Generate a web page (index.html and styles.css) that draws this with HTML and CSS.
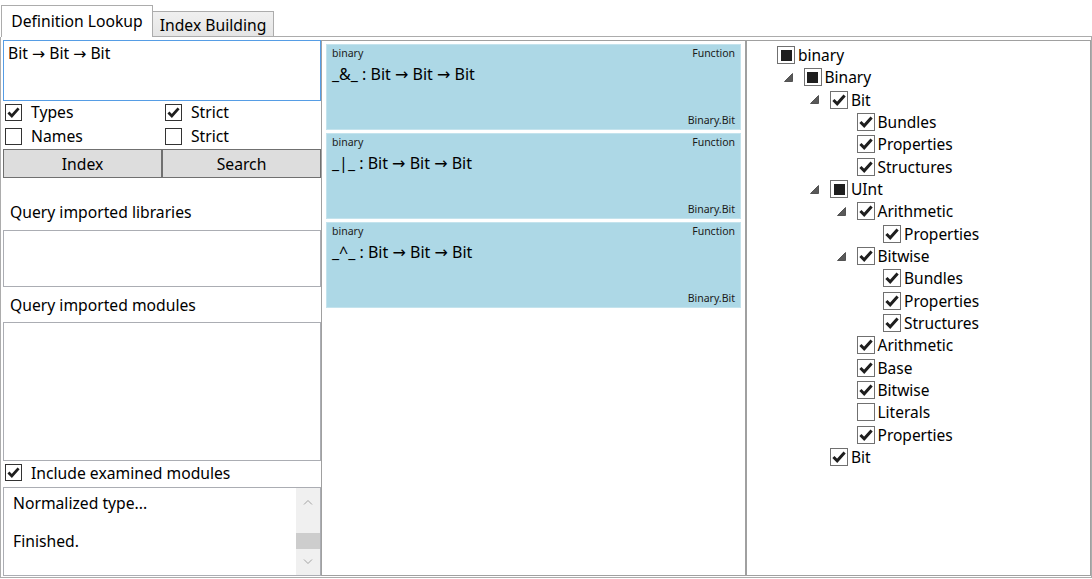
FILE: index.html
```html
<!DOCTYPE html>
<html>
<head>
<meta charset="utf-8">
<title>Definition Lookup</title>
<link rel="stylesheet" href="styles.css">
</head>
<body>
<div class="window">
  <div class="tabbar">
    <div class="tab active">Definition Lookup</div>
    <div class="tab inactive">Index Building</div>
    <div class="tabfill"></div>
  </div>
  <div class="content">
    <div class="left">
      <div class="query">Bit → Bit → Bit</div>
      <div class="opts">
        <div class="chk c1"><span class="cb"><svg viewBox="0 0 16 16"><path d="M2.6 8 L6.2 11.6 L13.4 3.6"/></svg></span>Types</div>
        <div class="chk c2"><span class="cb"><svg viewBox="0 0 16 16"><path d="M2.6 8 L6.2 11.6 L13.4 3.6"/></svg></span>Strict</div>
        <div class="chk c1"><span class="cb"></span>Names</div>
        <div class="chk c2"><span class="cb"></span>Strict</div>
      </div>
      <div class="btns">
        <div class="btn">Index</div>
        <div class="btn">Search</div>
      </div>
      <div class="lbl lbl-a">Query imported libraries</div>
      <div class="listbox lib"></div>
      <div class="lbl lbl-b">Query imported modules</div>
      <div class="listbox mods"></div>
      <div class="chk include"><span class="cb"><svg viewBox="0 0 16 16"><path d="M2.6 8 L6.2 11.6 L13.4 3.6"/></svg></span>Include examined modules</div>
      <div class="log">
        <div class="log-items">
          <div class="log-item">Normalized type...</div>
          <div class="log-item">Finished.</div>
        </div>
        <div class="scrollbar">
          <div class="sb-btn up"><svg viewBox="0 0 10 6"><polyline points="1,5.5 5,1.5 9,5.5"/></svg></div>
          <div class="sb-track"><div class="sb-thumb"></div></div>
          <div class="sb-btn down"><svg viewBox="0 0 10 6"><polyline points="1,0.5 5,4.5 9,0.5"/></svg></div>
        </div>
      </div>
    </div>

    <div class="results">
      <div class="card">
        <div class="card-head"><span>binary</span><span>Function</span></div>
        <div class="card-sig">_&amp;_ : Bit → Bit → Bit</div>
        <div class="card-foot">Binary.Bit</div>
      </div>
      <div class="card">
        <div class="card-head"><span>binary</span><span>Function</span></div>
        <div class="card-sig">_|_ : Bit → Bit → Bit</div>
        <div class="card-foot">Binary.Bit</div>
      </div>
      <div class="card">
        <div class="card-head"><span>binary</span><span>Function</span></div>
        <div class="card-sig">_^_ : Bit → Bit → Bit</div>
        <div class="card-foot">Binary.Bit</div>
      </div>
    </div>

    <div class="tree">
      <div class="row l0"><span class="exp"></span><span class="tcb ind"><span class="sq"></span></span><span class="tt">binary</span></div>
      <div class="row l1"><span class="exp"><svg viewBox="0 0 9 9"><polygon points="8.5,0.5 8.5,8.5 0.5,8.5"/></svg></span><span class="tcb ind"><span class="sq"></span></span><span class="tt">Binary</span></div>
      <div class="row l2"><span class="exp"><svg viewBox="0 0 9 9"><polygon points="8.5,0.5 8.5,8.5 0.5,8.5"/></svg></span><span class="tcb"><svg viewBox="0 0 16 16"><path d="M2.4 8 L6.2 11.8 L13.6 3.4"/></svg></span><span class="tt">Bit</span></div>
      <div class="row l3"><span class="exp"></span><span class="tcb"><svg viewBox="0 0 16 16"><path d="M2.4 8 L6.2 11.8 L13.6 3.4"/></svg></span><span class="tt">Bundles</span></div>
      <div class="row l3"><span class="exp"></span><span class="tcb"><svg viewBox="0 0 16 16"><path d="M2.4 8 L6.2 11.8 L13.6 3.4"/></svg></span><span class="tt">Properties</span></div>
      <div class="row l3"><span class="exp"></span><span class="tcb"><svg viewBox="0 0 16 16"><path d="M2.4 8 L6.2 11.8 L13.6 3.4"/></svg></span><span class="tt">Structures</span></div>
      <div class="row l2"><span class="exp"><svg viewBox="0 0 9 9"><polygon points="8.5,0.5 8.5,8.5 0.5,8.5"/></svg></span><span class="tcb ind"><span class="sq"></span></span><span class="tt">UInt</span></div>
      <div class="row l3"><span class="exp"><svg viewBox="0 0 9 9"><polygon points="8.5,0.5 8.5,8.5 0.5,8.5"/></svg></span><span class="tcb"><svg viewBox="0 0 16 16"><path d="M2.4 8 L6.2 11.8 L13.6 3.4"/></svg></span><span class="tt">Arithmetic</span></div>
      <div class="row l4"><span class="exp"></span><span class="tcb"><svg viewBox="0 0 16 16"><path d="M2.4 8 L6.2 11.8 L13.6 3.4"/></svg></span><span class="tt">Properties</span></div>
      <div class="row l3"><span class="exp"><svg viewBox="0 0 9 9"><polygon points="8.5,0.5 8.5,8.5 0.5,8.5"/></svg></span><span class="tcb"><svg viewBox="0 0 16 16"><path d="M2.4 8 L6.2 11.8 L13.6 3.4"/></svg></span><span class="tt">Bitwise</span></div>
      <div class="row l4"><span class="exp"></span><span class="tcb"><svg viewBox="0 0 16 16"><path d="M2.4 8 L6.2 11.8 L13.6 3.4"/></svg></span><span class="tt">Bundles</span></div>
      <div class="row l4"><span class="exp"></span><span class="tcb"><svg viewBox="0 0 16 16"><path d="M2.4 8 L6.2 11.8 L13.6 3.4"/></svg></span><span class="tt">Properties</span></div>
      <div class="row l4"><span class="exp"></span><span class="tcb"><svg viewBox="0 0 16 16"><path d="M2.4 8 L6.2 11.8 L13.6 3.4"/></svg></span><span class="tt">Structures</span></div>
      <div class="row l3"><span class="exp"></span><span class="tcb"><svg viewBox="0 0 16 16"><path d="M2.4 8 L6.2 11.8 L13.6 3.4"/></svg></span><span class="tt">Arithmetic</span></div>
      <div class="row l3"><span class="exp"></span><span class="tcb"><svg viewBox="0 0 16 16"><path d="M2.4 8 L6.2 11.8 L13.6 3.4"/></svg></span><span class="tt">Base</span></div>
      <div class="row l3"><span class="exp"></span><span class="tcb"><svg viewBox="0 0 16 16"><path d="M2.4 8 L6.2 11.8 L13.6 3.4"/></svg></span><span class="tt">Bitwise</span></div>
      <div class="row l3"><span class="exp"></span><span class="tcb"></span><span class="tt">Literals</span></div>
      <div class="row l3"><span class="exp"></span><span class="tcb"><svg viewBox="0 0 16 16"><path d="M2.4 8 L6.2 11.8 L13.6 3.4"/></svg></span><span class="tt">Properties</span></div>
      <div class="row l2"><span class="exp"></span><span class="tcb"><svg viewBox="0 0 16 16"><path d="M2.4 8 L6.2 11.8 L13.6 3.4"/></svg></span><span class="tt">Bit</span></div>
    </div>
  </div>
</div>
</body>
</html>
```

FILE: styles.css
```css
html, body {
  margin: 0;
  padding: 0;
  background: #ffffff;
}
body {
  font-family: "Noto Sans", "Open Sans", "DejaVu Sans", sans-serif;
  font-size: 15.7px;
  color: #000000;
}
.window {
  width: 1092px;
  height: 578px;
  display: flex;
  flex-direction: column;
}

/* Tabs */
.tabbar {
  height: 37px;
  flex: none;
  display: flex;
  align-items: flex-end;
}
.tab {
  box-sizing: border-box;
  border: 1px solid #acacac;
  display: flex;
  align-items: center;
  justify-content: center;
  white-space: nowrap;
}
.tab.active {
  width: 152px;
  height: 32px;
  margin-left: 1px;
  border-bottom: none;
  background: #ffffff;
  padding-bottom: 1px;
}
.tab.inactive {
  width: 122px;
  height: 26px;
  margin-left: -1px;
  background: linear-gradient(#f0f0f0, #e5e5e5);
  padding-top: 1px;
}
.tabfill {
  flex: 1;
  height: 37px;
  box-sizing: border-box;
  border-bottom: 1px solid #acacac;
}

/* Content */
.content {
  flex: 1;
  min-height: 0;
  display: flex;
  border: 1px solid #acacac;
  border-top: none;
  padding: 3px 0 1px 2px;
}

/* Left column */
.left {
  width: 318px;
  flex: none;
  display: flex;
  flex-direction: column;
}
.query {
  height: 61px;
  box-sizing: border-box;
  border: 1px solid #569de5;
  padding: 1px 4px 2px 4px;
  line-height: 22px;
  flex: none;
}
.opts {
  display: grid;
  grid-template-columns: 159px 159px;
  grid-auto-rows: 24px;
  flex: none;
}
.chk {
  display: flex;
  align-items: center;
  white-space: nowrap;
}
.chk.c1 { padding-left: 2px; }
.chk.c2 { padding-left: 3px; }
.opts .chk { padding-bottom: 2px; }
.cb {
  width: 17px;
  height: 17px;
  box-sizing: border-box;
  border: 1px solid #333333;
  background: #ffffff;
  margin-right: 9px;
  flex: none;
  display: flex;
  align-items: center;
  justify-content: center;
}
.cb svg {
  width: 15px;
  height: 15px;
}
.cb svg path, .tcb svg path {
  fill: none;
  stroke: #1e1e1e;
  stroke-width: 3;
  stroke-linecap: butt;
  stroke-linejoin: miter;
}
.btns {
  height: 29px;
  flex: none;
  display: flex;
}
.btn {
  flex: 1;
  box-sizing: border-box;
  border: 1px solid #707070;
  background: #dddddd;
  display: flex;
  align-items: center;
  justify-content: center;
}
.lbl {
  flex: none;
  box-sizing: border-box;
  padding-left: 7px;
  display: flex;
  align-items: center;
  white-space: nowrap;
}
.lbl-a {
  height: 52px;
  padding-top: 16px;
}
.lbl-b {
  height: 35px;
}
.listbox {
  box-sizing: border-box;
  border: 1px solid #abadb3;
  background: #ffffff;
}
.listbox.lib {
  height: 57px;
  flex: none;
}
.listbox.mods {
  flex: 1;
}
.chk.include {
  height: 25px;
  flex: none;
  padding-left: 2px;
  padding-bottom: 2px;
  box-sizing: border-box;
}
.log {
  margin-top: 1px;
  height: 89px;
  flex: none;
  box-sizing: border-box;
  border: 1px solid #abadb3;
  display: flex;
}
.log-items {
  flex: 1;
  padding-left: 9px;
}
.log-item {
  height: 38px;
  line-height: 31px;
}
.scrollbar {
  width: 24px;
  flex: none;
  background: #f0f0f0;
  display: flex;
  flex-direction: column;
}
.sb-btn {
  display: flex;
  align-items: center;
  justify-content: center;
}
.sb-btn.up { height: 28px; }
.sb-btn.down { flex: 1; }
.sb-btn svg {
  width: 10px;
  height: 6px;
}
.sb-btn polyline {
  fill: none;
  stroke: #a3a3a3;
  stroke-width: 1;
}
.sb-track {
  height: 33px;
  box-sizing: border-box;
  padding-top: 17px;
}
.sb-thumb {
  height: 16px;
  background: #cdcdcd;
}

/* Results */
.results {
  width: 425px;
  flex: none;
  box-sizing: border-box;
  border: 1px solid #a0a0a0;
  padding: 3px 4px;
  display: flex;
  flex-direction: column;
  gap: 3px;
}
.card {
  height: 86px;
  flex: none;
  box-sizing: border-box;
  background: #add8e6;
  border: 1px solid #c4e3ed;
  padding: 1px 5px 2px 5px;
  display: flex;
  flex-direction: column;
}
.card-head {
  display: flex;
  justify-content: space-between;
  font-size: 10.5px;
  line-height: 14px;
  color: #1a1a1a;
}
.card-sig {
  font-size: 16px;
  line-height: 20px;
  margin-top: 4px;
  white-space: nowrap;
}
.card-foot {
  margin-top: auto;
  text-align: right;
  font-size: 10.5px;
  line-height: 14px;
  color: #1a1a1a;
}

/* Tree */
.tree {
  flex: 1;
  box-sizing: border-box;
  border: 1px solid #a0a0a0;
  padding: 3px 0 0 4px;
}
.row {
  height: 22.33px;
  display: flex;
  align-items: center;
  white-space: nowrap;
}
.row.l1 { padding-left: 26.5px; }
.row.l2 { padding-left: 53px; }
.row.l3 { padding-left: 79.5px; }
.row.l4 { padding-left: 106px; }
.exp {
  width: 26px;
  flex: none;
  display: flex;
  align-items: center;
  padding-left: 6px;
  box-sizing: border-box;
}
.exp svg {
  width: 9px;
  height: 9px;
}
.exp polygon {
  fill: #595959;
  stroke: #3c3c3c;
  stroke-width: 0.8;
}
.tcb {
  width: 18px;
  height: 18px;
  box-sizing: border-box;
  border: 1px solid #707070;
  background: #ffffff;
  flex: none;
  display: flex;
  align-items: center;
  justify-content: center;
}
.tcb svg {
  width: 16px;
  height: 16px;
}
.tcb .sq {
  width: 11px;
  height: 11px;
  background: #1e1e1e;
}
.tt {
  margin-left: 3px;
  font-size: 15.5px;
}
```
